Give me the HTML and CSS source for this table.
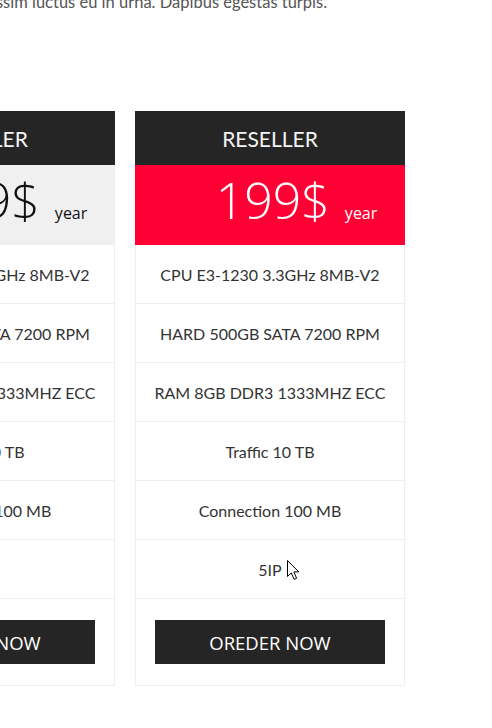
FILE: index.html
```html
<!DOCTYPE html>
<html lang="en">
<head>
<meta charset="utf-8">
<title>Pricing</title>
<link rel="stylesheet" href="styles.css">
</head>
<body>
<p class="intro">dignissim luctus eu in urna. Dapibus egestas turpis.</p>
<section class="pricing">
  <div class="card">
    <div class="card-head">RESELLER</div>
    <div class="card-price"><span class="amount">199$</span><span class="period">year</span></div>
    <ul class="features">
      <li>CPU E3-1230 3.3GHz 8MB-V2</li>
      <li>HARD 500GB SATA 7200 RPM</li>
      <li>RAM 8GB DDR3 1333MHZ ECC</li>
      <li>Traffic 10 TB</li>
      <li>Connection 100 MB</li>
      <li>5IP</li>
      <li class="foot"><a class="order" href="#">OREDER NOW</a></li>
    </ul>
  </div>
  <div class="card card-hot">
    <div class="card-head">RESELLER</div>
    <div class="card-price"><span class="amount">199$</span><span class="period">year</span></div>
    <ul class="features">
      <li>CPU E3-1230 3.3GHz 8MB-V2</li>
      <li>HARD 500GB SATA 7200 RPM</li>
      <li>RAM 8GB DDR3 1333MHZ ECC</li>
      <li>Traffic 10 TB</li>
      <li>Connection 100 MB</li>
      <li>5IP</li>
      <li class="foot"><a class="order" href="#">OREDER NOW</a></li>
    </ul>
  </div>
</section>
<svg class="cursor" width="14" height="21" viewBox="0 0 14 21" aria-hidden="true">
  <path d="M0.5 0.5 L0.5 16.5 L4.3 12.9 L7.1 19.4 L9.6 18.3 L6.9 11.9 L11.8 11.9 Z" fill="#fff" stroke="#000" stroke-width="1" stroke-linejoin="round"/>
</svg>
</body>
</html>
```

FILE: styles.css
```css
html, body {
  margin: 0;
  padding: 0;
  background: #fff;
  overflow: hidden;
}

body {
  width: 492px;
  height: 728px;
  font-family: "Lato", "Open Sans", sans-serif;
  color: #333;
}

.intro {
  margin: -10px 0 0 -39px;
  white-space: nowrap;
  font-family: "Lato", sans-serif;
  font-size: 16.5px;
  line-height: 24px;
  color: #555;
}

.pricing {
  display: flex;
  gap: 20px;
  margin: 97px 0 0 -155px;
}

.card {
  flex: none;
  width: 270px;
}

.card-head {
  height: 54px;
  background: #252525;
  color: #f4f4f4;
  display: flex;
  align-items: center;
  justify-content: center;
  font-size: 21px;
}

.card-price {
  height: 80px;
  box-sizing: border-box;
  padding: 10px 0 0 53px;
  background: #f0f0f0;
  color: #111;
  display: flex;
  justify-content: center;
  align-items: baseline;
  gap: 15px;
}

.card-hot .card-price {
  background: #fe0033;
  color: #fff;
}

.amount {
  font-family: "Open Sans", sans-serif;
  font-weight: 300;
  font-size: 50px;
  line-height: 1;
}

.period {
  font-family: "Open Sans", sans-serif;
  font-size: 16px;
  line-height: 1;
}

.features {
  list-style: none;
  margin: 0;
  padding: 0;
  border: 1px solid #eee;
  border-top: none;
}

.features li {
  height: 58px;
  border-bottom: 1px solid #eee;
  display: flex;
  align-items: center;
  justify-content: center;
  font-size: 16px;
  color: #333;
}

.features li.foot {
  height: auto;
  padding: 21px 19px;
  border-bottom: none;
}

.order {
  display: flex;
  align-items: center;
  justify-content: center;
  width: 100%;
  height: 44px;
  background: #252525;
  color: #fff;
  text-decoration: none;
  font-family: "Open Sans", sans-serif;
  font-size: 18.5px;
}

.cursor {
  position: absolute;
  left: 287px;
  top: 560px;
}
```
